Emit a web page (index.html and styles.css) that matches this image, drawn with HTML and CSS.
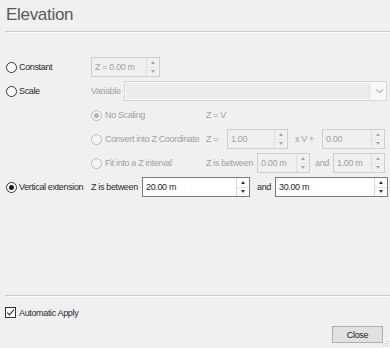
FILE: index.html
```html
<!DOCTYPE html>
<html>
<head>
<meta charset="utf-8">
<link rel="stylesheet" href="styles.css">
</head>
<body>
<div class="dialog">
  <h1 class="title">Elevation</h1>
  <div class="sep"></div>

  <div class="rows">
    <div class="row">
      <div class="lead"><span class="radio"></span><span>Constant</span></div>
      <div class="spin dis w-const"><span class="val">Z = 0.00 m</span><span class="btns"><i class="up"></i><i class="dn"></i></span></div>
    </div>

    <div class="row">
      <div class="lead"><span class="radio"></span><span>Scale</span></div>
      <span class="muted lbl-var">Variable</span>
      <div class="combo"><span class="combo-field"></span><span class="combo-arrow"><svg width="9" height="6" viewBox="0 0 9 6"><path d="M1 1.5 L4.5 4.5 L8 1.5" fill="none" stroke="#b4b4b4" stroke-width="1.1"/></svg></span></div>
    </div>

    <div class="row">
      <div class="lead"></div>
      <div class="sub"><span class="radio dis on"></span><span class="muted">No Scaling</span></div>
      <span class="muted">Z = V</span>
    </div>

    <div class="row">
      <div class="lead"></div>
      <div class="sub"><span class="radio dis"></span><span class="muted">Convert into Z Coordinate</span></div>
      <span class="muted lbl-eq">Z =</span>
      <div class="spin dis w-a"><span class="val">1.00</span><span class="btns"><i class="up"></i><i class="dn"></i></span></div>
      <span class="muted lbl-mul">x V +</span>
      <div class="spin dis w-b"><span class="val">0.00</span><span class="btns"><i class="up"></i><i class="dn"></i></span></div>
    </div>

    <div class="row">
      <div class="lead"></div>
      <div class="sub"><span class="radio dis"></span><span class="muted">Fit into a Z interval</span></div>
      <span class="muted lbl-between">Z is between</span>
      <div class="spin dis w-c"><span class="val">0.00 m</span><span class="btns"><i class="up"></i><i class="dn"></i></span></div>
      <span class="muted lbl-and">and</span>
      <div class="spin dis w-d"><span class="val">1.00 m</span><span class="btns"><i class="up"></i><i class="dn"></i></span></div>
    </div>

    <div class="row">
      <div class="lead"><span class="radio on"></span><span>Vertical extension</span></div>
      <span class="lbl-between2">Z is between</span>
      <div class="spin w-e"><span class="val">20.00 m</span><span class="btns"><i class="up"></i><i class="dn"></i></span></div>
      <span class="lbl-and2">and</span>
      <div class="spin w-f"><span class="val">30.00 m</span><span class="btns"><i class="up"></i><i class="dn"></i></span></div>
    </div>
  </div>

  <div class="footer">
    <div class="sep"></div>
    <div class="check-row">
      <span class="checkbox"><svg width="9" height="9" viewBox="0 0 9 9"><path d="M1.2 4.6 L3.5 6.9 L7.9 1.6" fill="none" stroke="#333" stroke-width="1.1"/></svg></span>
      <span>Automatic Apply</span>
    </div>
    <div class="actions">
      <button class="btn">Close</button>
    </div>
  </div>

  <svg class="grip" width="6" height="6" viewBox="0 0 6 6">
    <rect x="4" y="0" width="1" height="1" fill="#c2c2c2"/>
    <rect x="2" y="2" width="1" height="1" fill="#c2c2c2"/>
    <rect x="4" y="2" width="1" height="1" fill="#c2c2c2"/>
    <rect x="0" y="4" width="1" height="1" fill="#c2c2c2"/>
    <rect x="2" y="4" width="1" height="1" fill="#c2c2c2"/>
    <rect x="4" y="4" width="1" height="1" fill="#c2c2c2"/>
  </svg>
</div>
</body>
</html>
```

FILE: styles.css
```css
* { box-sizing: border-box; }
html, body { margin: 0; padding: 0; }
body {
  width: 390px;
  height: 348px;
  background: #f0f0f0;
  font-family: "Liberation Sans", Arial, sans-serif;
  font-size: 9px;
  letter-spacing: -0.35px;
  color: #2a2a2a;
  overflow: hidden;
}
.dialog {
  position: relative;
  height: 348px;
  display: flex;
  flex-direction: column;
}
.title {
  margin: 5px 0 0 6px;
  font-size: 17px;
  line-height: 20px;
  font-weight: normal;
  color: #5a5a5a;
  letter-spacing: -0.3px;
}
.sep {
  height: 2px;
  margin: 6px 0 0 5px;
  border-top: 1px solid #cacaca;
  border-bottom: 1px solid #fafafa;
}
.rows {
  margin-top: 24px;
  padding-left: 6px;
  display: flex;
  flex-direction: column;
  gap: 4px;
}
.row {
  display: flex;
  align-items: center;
  height: 20px;
  white-space: nowrap;
}
.lead {
  width: 84px;
  flex: none;
  display: flex;
  align-items: center;
  gap: 2px;
}
.sub {
  width: 116px;
  flex: none;
  display: flex;
  align-items: center;
  gap: 3px;
  padding-left: 1px;
}
.muted { color: #a2a2a2; }

.radio {
  width: 11px;
  height: 11px;
  flex: none;
  border-radius: 50%;
  border: 1px solid #333;
  background: #fff;
  display: flex;
  align-items: center;
  justify-content: center;
}
.radio.on::after {
  content: "";
  width: 5px;
  height: 5px;
  border-radius: 50%;
  background: #1a1a1a;
}
.radio.dis { border-color: #bdbdbd; background: #f5f5f5; }
.radio.dis.on::after { background: #b3b3b3; }

.spin {
  flex: none;
  display: flex;
  height: 20px;
  border: 1px solid #7a7a7a;
  background: #fff;
  color: #1f1f1f;
}
.spin .val {
  flex: 1;
  padding-left: 3px;
  line-height: 18px;
}
.btns {
  width: 13px;
  flex: none;
  display: flex;
  flex-direction: column;
  border-left: 1px solid #d6d6d6;
}
.btns i {
  flex: 1;
  display: flex;
  align-items: center;
  justify-content: center;
}
.btns i + i { border-top: 1px solid #e4e4e4; }
.btns .up::before {
  content: "";
  border-left: 2.5px solid transparent;
  border-right: 2.5px solid transparent;
  border-bottom: 3px solid #333;
}
.btns .dn::before {
  content: "";
  border-left: 2.5px solid transparent;
  border-right: 2.5px solid transparent;
  border-top: 3px solid #333;
}
.spin.dis { border-color: #cfcfcf; background: #f0f0f0; color: #a2a2a2; }
.spin.dis .btns { border-left-color: #dedede; }
.spin.dis .btns i + i { border-top-color: #e6e6e6; }
.spin.dis .up::before { border-bottom-color: #a8a8a8; }
.spin.dis .dn::before { border-top-color: #a8a8a8; }

.w-const { width: 69px; margin-left: 1px; }
.w-a { width: 61px; }
.w-b { width: 63px; }
.w-c { width: 53px; }
.w-d { width: 52px; }
.w-e { width: 108px; }
.w-f { width: 113px; }

.lbl-var { width: 33px; margin-left: 1px; flex: none; }
.lbl-eq { width: 21px; flex: none; }
.lbl-mul { width: 27px; margin-left: 7px; flex: none; }
.lbl-between { width: 51px; flex: none; }
.lbl-and { width: 18px; margin-left: 5px; flex: none; }
.lbl-between2 { width: 52px; flex: none; padding-left: 1px; }
.lbl-and2 { width: 18px; margin-left: 7px; flex: none; }

.combo {
  width: 263px;
  height: 20px;
  flex: none;
  display: flex;
  border: 1px solid #d6d6d6;
  background: #ececec;
}
.combo-field {
  flex: 1;
  border: 1px solid #f7f7f7;
}
.combo-arrow {
  width: 14px;
  display: flex;
  align-items: center;
  justify-content: center;
  background: #f8f8f8;
}

.footer {
  margin-top: auto;
  display: flex;
  flex-direction: column;
}
.footer .sep { margin-top: 0; }
.check-row {
  margin: 10px 0 0 5px;
  height: 11px;
  display: flex;
  align-items: center;
  gap: 3px;
}
.checkbox {
  width: 11px;
  height: 11px;
  flex: none;
  border: 1px solid #333;
  background: #fff;
  display: flex;
  align-items: center;
  justify-content: center;
}
.actions {
  display: flex;
  justify-content: flex-end;
  padding: 8px 7px 5px 0;
}
.btn {
  width: 51px;
  height: 17px;
  padding: 0;
  border: 1px solid #adadad;
  background: #e1e1e1;
  font-family: inherit;
  font-size: 9px;
  letter-spacing: -0.35px;
  color: #222;
}
.grip {
  position: absolute;
  right: 1px;
  bottom: 1px;
}
```
